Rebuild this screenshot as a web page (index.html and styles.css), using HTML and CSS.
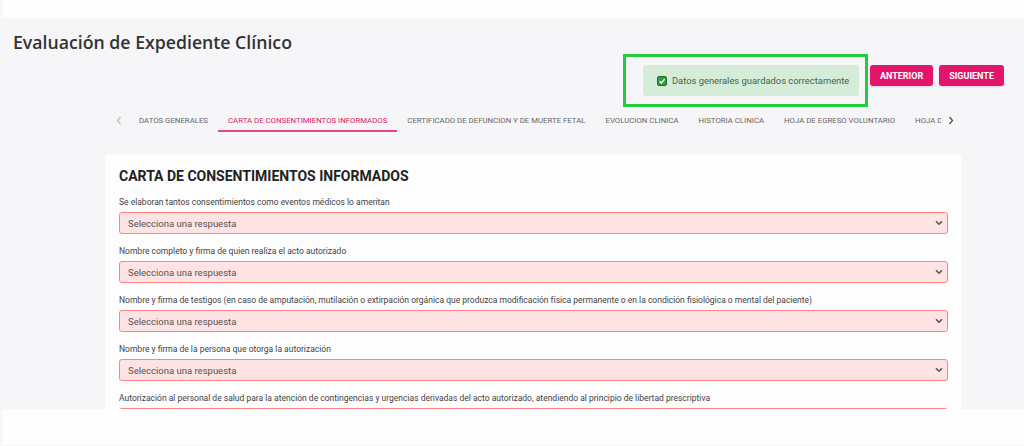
FILE: index.html
```html
<!DOCTYPE html>
<html lang="es">

<head>
  <meta charset="UTF-8">
  <meta name="viewport" content="width=device-width, initial-scale=1.0">
  <title>Evaluación de Expediente Clínico</title>
  <link rel="stylesheet" href="styles.css">
</head>

<body>
  <div class="topbar"></div>

  <main class="page">
    <h1>Evaluación de Expediente Clínico</h1>

    <div class="toolbar">
      <div class="toast-frame">
        <div class="toast">
          <span class="check">
            <svg width="10" height="10" viewBox="0 0 10 10">
              <rect x="0.5" y="0.5" width="9" height="9" rx="1.5" fill="#2e9e3e" stroke="#246b2f" />
              <path d="M2.4 5.2 L4.2 7 L7.6 3.2" fill="none" stroke="#fff" stroke-width="1.3" />
            </svg>
          </span>
          Datos generales guardados correctamente
        </div>
      </div>
      <button class="btn">ANTERIOR</button>
      <button class="btn">SIGUIENTE</button>
    </div>

    <nav class="tabs">
      <span class="tab-arrow">
        <svg width="6" height="9" viewBox="0 0 6 9"><path d="M4.5 1 L1.5 4.5 L4.5 8" fill="none" stroke="#bbb" stroke-width="1.2" /></svg>
      </span>
      <div class="tab-list">
        <a class="tab">DATOS GENERALES</a>
        <a class="tab active">CARTA DE CONSENTIMIENTOS INFORMADOS</a>
        <a class="tab">CERTIFICADO DE DEFUNCION Y DE MUERTE FETAL</a>
        <a class="tab">EVOLUCION CLINICA</a>
        <a class="tab">HISTORIA CLINICA</a>
        <a class="tab">HOJA DE EGRESO VOLUNTARIO</a>
        <a class="tab">HOJA D</a>
      </div>
      <span class="tab-arrow">
        <svg width="6" height="9" viewBox="0 0 6 9"><path d="M1.5 1 L4.5 4.5 L1.5 8" fill="none" stroke="#555" stroke-width="1.3" /></svg>
      </span>
    </nav>

    <section class="card">
      <h2>CARTA DE CONSENTIMIENTOS INFORMADOS</h2>

      <div class="field">
        <label>Se elaboran tantos consentimientos como eventos médicos lo ameritan</label>
        <div class="select-wrap">
          <select><option>Selecciona una respuesta</option></select>
          <svg class="caret" width="8" height="6" viewBox="0 0 8 6"><path d="M1 1.2 L4 4.2 L7 1.2" fill="none" stroke="#555" stroke-width="1.6" /></svg>
        </div>
      </div>

      <div class="field">
        <label>Nombre completo y firma de quien realiza el acto autorizado</label>
        <div class="select-wrap">
          <select><option>Selecciona una respuesta</option></select>
          <svg class="caret" width="8" height="6" viewBox="0 0 8 6"><path d="M1 1.2 L4 4.2 L7 1.2" fill="none" stroke="#555" stroke-width="1.6" /></svg>
        </div>
      </div>

      <div class="field">
        <label>Nombre y firma de testigos (en caso de amputación, mutilación o extirpación orgánica que produzca modificación física permanente o en la condición fisiológica o mental del paciente)</label>
        <div class="select-wrap">
          <select><option>Selecciona una respuesta</option></select>
          <svg class="caret" width="8" height="6" viewBox="0 0 8 6"><path d="M1 1.2 L4 4.2 L7 1.2" fill="none" stroke="#555" stroke-width="1.6" /></svg>
        </div>
      </div>

      <div class="field">
        <label>Nombre y firma de la persona que otorga la autorización</label>
        <div class="select-wrap">
          <select><option>Selecciona una respuesta</option></select>
          <svg class="caret" width="8" height="6" viewBox="0 0 8 6"><path d="M1 1.2 L4 4.2 L7 1.2" fill="none" stroke="#555" stroke-width="1.6" /></svg>
        </div>
      </div>

      <div class="field">
        <label>Autorización al personal de salud para la atención de contingencias y urgencias derivadas del acto autorizado, atendiendo al principio de libertad prescriptiva</label>
        <div class="select-wrap">
          <select><option>Selecciona una respuesta</option></select>
          <svg class="caret" width="8" height="6" viewBox="0 0 8 6"><path d="M1 1.2 L4 4.2 L7 1.2" fill="none" stroke="#555" stroke-width="1.6" /></svg>
        </div>
      </div>
    </section>
  </main>

  <div class="footer"></div>
</body>

</html>
```

FILE: styles.css
```css
* {
  margin: 0;
  padding: 0;
  box-sizing: border-box;
}

html,
body {
  height: 100%;
}

body {
  font-family: Roboto, 'Liberation Sans', sans-serif;
  background: #f6f5f8;
  display: flex;
  flex-direction: column;
  overflow: hidden;
}

.topbar {
  height: 18px;
  margin-left: 2px;
  background: #fdfdfd;
  flex-shrink: 0;
}

.page {
  flex: 1;
  overflow: hidden;
  padding: 0 20px 0 13px;
}

h1 {
  font-family: 'Open Sans', 'Noto Sans', sans-serif;
  font-size: 17.7px;
  font-weight: 600;
  line-height: 26px;
  color: #333;
  margin-top: 11px;
}

.toolbar {
  display: flex;
  justify-content: flex-end;
  align-items: flex-start;
  gap: 6px;
  margin-top: -1px;
}

.toast-frame {
  width: 245px;
  height: 53px;
  border: 3px solid #22cc3c;
  padding: 8px 6px 8px 17px;
  margin-right: -4px;
}

.toast {
  height: 100%;
  background: #d5ecd9;
  border-radius: 3px;
  display: flex;
  align-items: center;
  gap: 5px;
  padding: 0 10px 0 14px;
  font-size: 9.4px;
  color: #3b6646;
  white-space: nowrap;
}

.check {
  display: flex;
}

.btn {
  margin-top: 11px;
  height: 21px;
  padding: 0 10px;
  border: none;
  border-radius: 3px;
  background: #e2146b;
  color: #fff;
  font-family: Roboto, sans-serif;
  font-size: 9px;
  font-weight: 700;
  box-shadow: 0 1px 2px rgba(0, 0, 0, 0.15);
}

.tabs {
  display: flex;
  align-items: stretch;
  height: 24px;
  margin: 1px 0 0 96px;
  width: 852px;
}

.tab-arrow {
  width: 20px;
  display: flex;
  align-items: center;
  justify-content: center;
  flex-shrink: 0;
}

.tab-list {
  display: flex;
  overflow: hidden;
  flex: 1;
}

.tab {
  padding: 2px 10px 0;
  font-size: 7.8px;
  color: #666;
  white-space: nowrap;
  display: flex;
  align-items: center;
  border-bottom: 2px solid transparent;
}

.tab.active {
  color: #e2146b;
  border-bottom-color: #e8467f;
}

.card {
  margin: 22px 0 0 92px;
  width: 857px;
  background: #fdfdfd;
  border-radius: 3px;
  padding: 13px 14px;
  box-shadow: 0 0 2px rgba(0, 0, 0, 0.05);
}

h2 {
  font-size: 14px;
  font-weight: 700;
  color: #222;
  line-height: 18px;
  margin-bottom: 12px;
}

.field {
  margin-bottom: 12px;
}

.field label {
  display: block;
  font-size: 8.5px;
  color: #444;
  line-height: 11px;
  margin-bottom: 4px;
}

.select-wrap {
  position: relative;
}

select {
  display: block;
  appearance: none;
  width: 100%;
  height: 22px;
  border: 1.5px solid #ff8585;
  border-radius: 3px;
  background: #fde3e3;
  font-family: Roboto, sans-serif;
  font-size: 9.5px;
  color: #555;
  padding: 0 8px;
}

.caret {
  position: absolute;
  right: 5px;
  top: 8px;
}

.footer {
  height: 36px;
  margin: 0 0 1px 2px;
  background: #fdfdfd;
  flex-shrink: 0;
}
```
